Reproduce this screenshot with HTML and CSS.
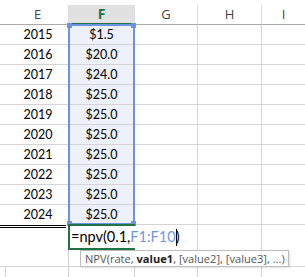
FILE: index.html
```html
<!DOCTYPE html>
<html lang="en">
<head>
  <meta charset="UTF-8">
  <title>NPV</title>
  <link rel="stylesheet" href="styles.css">
</head>
<body>

<div id="sheet">
  <div class="grid">
    <div class="hd col-e">E</div>
    <div class="hd sel">F</div>
    <div class="hd">G</div>
    <div class="hd">H</div>
    <div class="hd last">I</div>
  </div>

  <div class="grid" id="rows"></div>

  <div class="grid">
    <div class="cell col-e tall"><div class="dbl"></div></div>
    <div class="cell tall"></div>
    <div class="cell tall"></div>
    <div class="cell tall"></div>
    <div class="cell tall last"></div>
  </div>

  <div class="grid">
    <div class="cell col-e rest"><div class="edge"></div></div>
    <div class="cell rest"></div>
    <div class="cell rest"></div>
    <div class="cell rest"></div>
    <div class="cell rest last"></div>
  </div>

  <div class="selection">
    <span class="handle tl"></span>
    <span class="handle tr"></span>
    <span class="handle bl"></span>
    <span class="handle br"></span>
  </div>

  <div class="editor">=npv(0.1,<span class="ref">F1:F10</span><span class="caret"></span>)</div>

  <div class="tip">NPV(rate, <b>value1</b>, [value2], [value3], ...)</div>
</div>

<script type="text/javascript">
  const years = [2015, 2016, 2017, 2018, 2019, 2020, 2021, 2022, 2023, 2024]
  const values = ['$1.5', '$20.0', '$24.0', '$25.0', '$25.0', '$25.0', '$25.0', '$25.0', '$25.0', '$25.0']
  const rowsElement = document.getElementById('rows')

  years.forEach((year, i) => {
    const lastRow = i === years.length - 1 ? ' end' : ''
    rowsElement.innerHTML += `<div class="cell col-e${lastRow}">${year}</div>` +
      `<div class="cell fill">${values[i]}</div>` +
      `<div class="cell"></div><div class="cell"></div><div class="cell last"></div>`
  })
</script>

</body>
</html>
```

FILE: styles.css
```css
* {
  box-sizing: border-box;
}

body {
  margin: 0;
  background: white;
  overflow: hidden;
}

#sheet {
  position: relative;
  padding-top: 5px;
  height: 277px;
}

.grid {
  display: grid;
  grid-template-columns: 69px 66px 63px 64px 1fr;
}

.hd {
  height: 20px;
  border-right: 1px solid #dcdcdc;
  border-bottom: 1px solid #ababab;
  font-family: "Open Sans", sans-serif;
  font-size: 13px;
  color: #444;
  text-align: center;
  line-height: 19px;
}

.hd.col-e {
  padding-left: 7px;
}

.hd.sel {
  background: #e1e1e1;
  color: #217346;
  font-weight: bold;
  border-bottom: 2px solid #217346;
  line-height: 18px;
  font-size: 14px;
}

.cell {
  height: 20px;
  border-right: 1px solid #d4d4d4;
  border-bottom: 1px solid #d4d4d4;
  font-family: Lato, sans-serif;
  font-size: 12.5px;
  color: #000;
  text-align: center;
  line-height: 19px;
}

.cell.col-e {
  padding-left: 8px;
}

.cell.end {
  border-bottom: none;
}

.cell.fill {
  background: #edf1fb;
}

.last {
  border-right: none;
}

.cell.tall {
  height: 42px;
}

.cell.tall.col-e {
  padding-left: 0;
}

.dbl {
  margin-right: 2px;
  border-top: 3px double #000;
}

.cell.rest {
  height: 20px;
  border-bottom: none;
}

.cell.rest.col-e {
  padding-left: 0;
}

.edge {
  margin-left: 5px;
  height: 100%;
  border-left: 1px solid #d4d4d4;
}

.selection {
  position: absolute;
  left: 68px;
  top: 24px;
  width: 67px;
  height: 201px;
  border: 2px solid #6c93e0;
}

.handle {
  position: absolute;
  width: 5px;
  height: 5px;
  background: #6c93e0;
}

.handle.tl { left: -3px; top: -3px; }
.handle.tr { right: -3px; top: -3px; }
.handle.bl { left: -3px; bottom: -3px; }
.handle.br { right: -3px; bottom: -3px; }

.editor {
  position: absolute;
  left: 68px;
  top: 224px;
  width: 67px;
  height: 26px;
  border: 2px solid #217346;
  border-right: none;
  background: white;
  padding-left: 1px;
  font-family: Lato, sans-serif;
  font-size: 14.5px;
  line-height: 21px;
  color: #000;
  white-space: nowrap;
  overflow: visible;
}

.editor .ref {
  color: #7097e6;
}

.caret {
  display: inline-block;
  width: 1px;
  height: 17px;
  background: #000;
  vertical-align: -4px;
  margin-right: -1px;
}

.tip {
  position: absolute;
  left: 80px;
  top: 250px;
  width: 209px;
  height: 17px;
  border: 1px solid #bdbdbd;
  background: white;
  box-shadow: 1px 1px 2px rgba(0, 0, 0, 0.12);
  padding-left: 4px;
  font-family: "Open Sans", sans-serif;
  font-size: 11.1px;
  line-height: 15px;
  color: #555;
  white-space: nowrap;
}

.tip b {
  color: #222;
}
```
